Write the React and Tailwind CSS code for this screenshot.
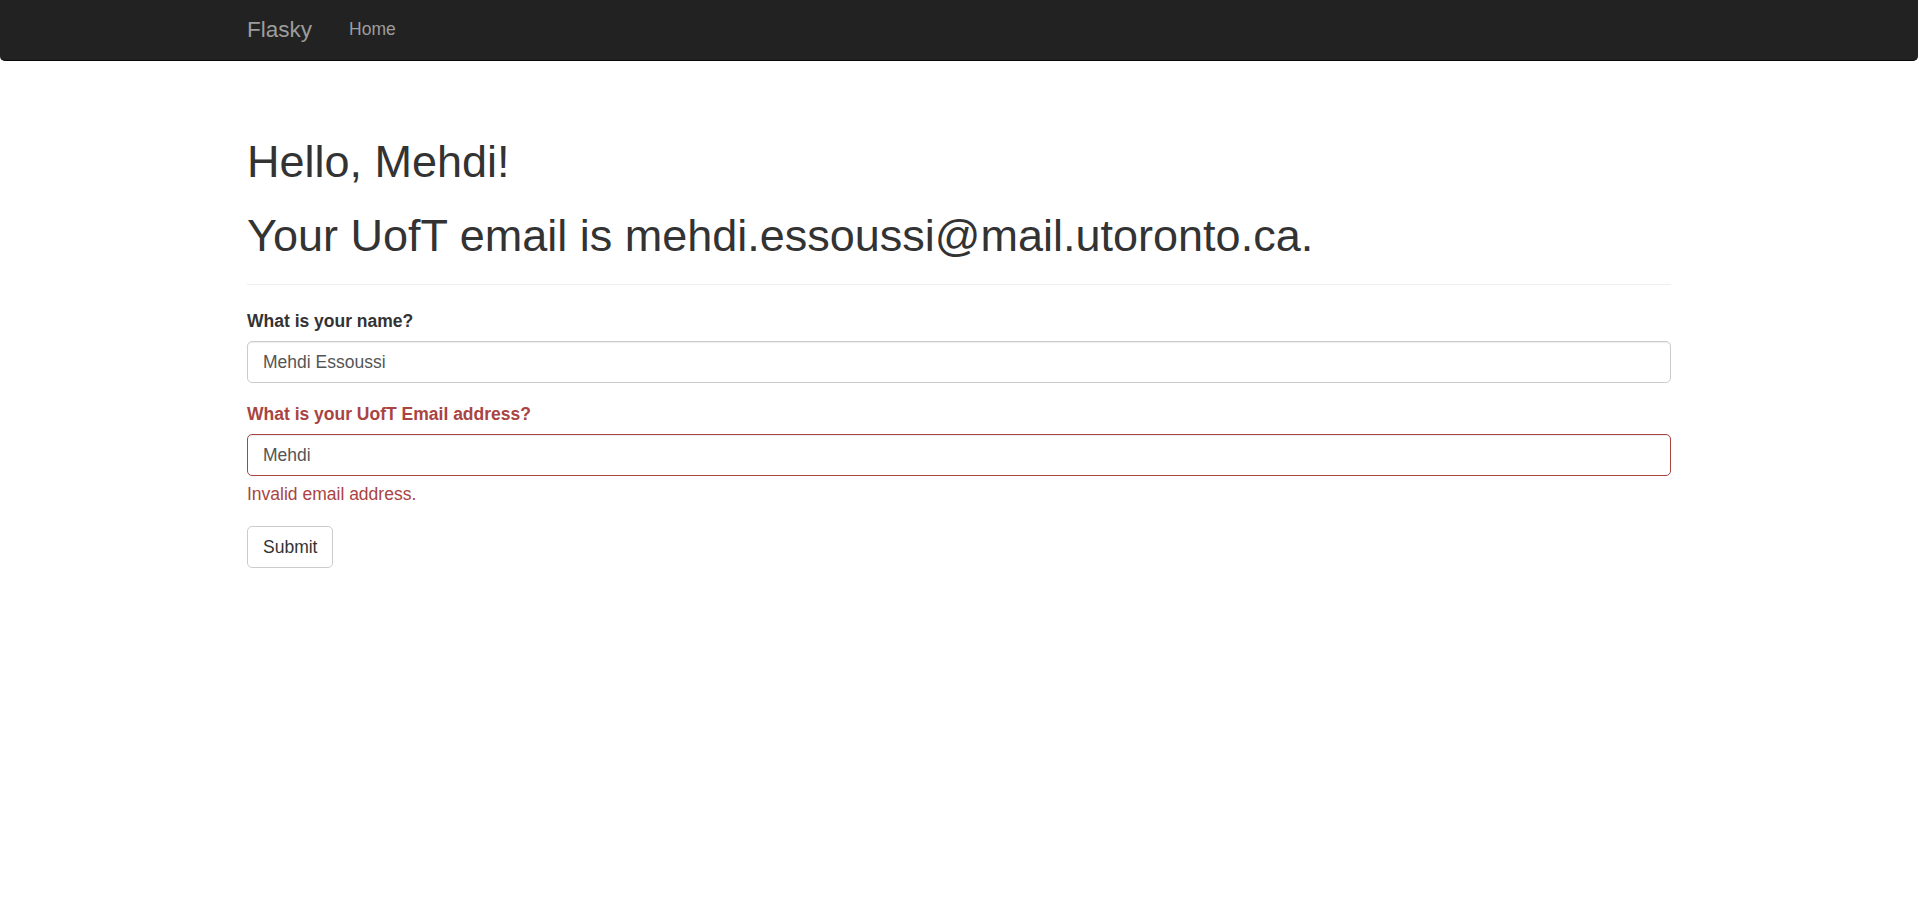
import { useState } from 'react';

const font = { fontFamily: '"Liberation Sans", Arial, Helvetica, sans-serif' };

function Navbar() {
  return (
    <nav className="h-[61px] bg-[#222] border-b border-[#080808] rounded-b-[5px]">
      <div className="w-[1424px] mx-auto h-[60px] pb-[2px] flex items-center">
        <a href="#" className="text-[22.5px] leading-[25px] text-[#9d9d9d] hover:text-white">
          Flasky
        </a>
        <ul className="flex ml-[37px]">
          <li>
            <a href="#" className="text-[17.5px] leading-[25px] text-[#9d9d9d] hover:text-white">
              Home
            </a>
          </li>
        </ul>
      </div>
    </nav>
  );
}

function Field({ label, value, onChange, error }) {
  return (
    <div className="mb-[19px]">
      <label
        className={`block h-[25px] text-[17.5px] leading-[25px] font-bold mb-[7px] ${
          error ? 'text-[#a94442]' : 'text-[#333]'
        }`}
      >
        {label}
      </label>
      <input
        type="text"
        value={value}
        onChange={(e) => onChange(e.target.value)}
        className={`block w-full h-[42px] px-[15px] text-[17.5px] text-[#555] bg-white border rounded-[5px] shadow-[inset_0_1px_1px_rgba(0,0,0,0.075)] outline-none ${
          error ? 'border-[#a94442]' : 'border-[#ccc]'
        }`}
      />
      {error && (
        <p className="mt-[6px] text-[17.5px] leading-[25px] text-[#a94442]">{error}</p>
      )}
    </div>
  );
}

export default function App() {
  const [name, setName] = useState('Mehdi Essoussi');
  const [email, setEmail] = useState('Mehdi');

  return (
    <div className="min-h-screen bg-white text-[#333]" style={font}>
      <Navbar />
      <div className="w-[1424px] mx-auto">
        <div className="mt-[76px] pb-[12px] mb-[24px] border-b border-[#eee]">
          <h1 className="text-[45px] leading-[49.5px] font-medium mb-[24px]">Hello, Mehdi!</h1>
          <h1 className="text-[45px] leading-[49.5px] font-medium mb-[12px]">
            Your UofT email is mehdi.essoussi@mail.utoronto.ca.
          </h1>
        </div>
        <form onSubmit={(e) => e.preventDefault()}>
          <Field label="What is your name?" value={name} onChange={setName} />
          <Field
            label="What is your UofT Email address?"
            value={email}
            onChange={setEmail}
            error="Invalid email address."
          />
          <button
            type="submit"
            className="h-[42px] px-[15px] text-[17.5px] text-[#333] bg-white border border-[#ccc] rounded-[5px] hover:bg-[#e6e6e6]"
          >
            Submit
          </button>
        </form>
      </div>
    </div>
  );
}
